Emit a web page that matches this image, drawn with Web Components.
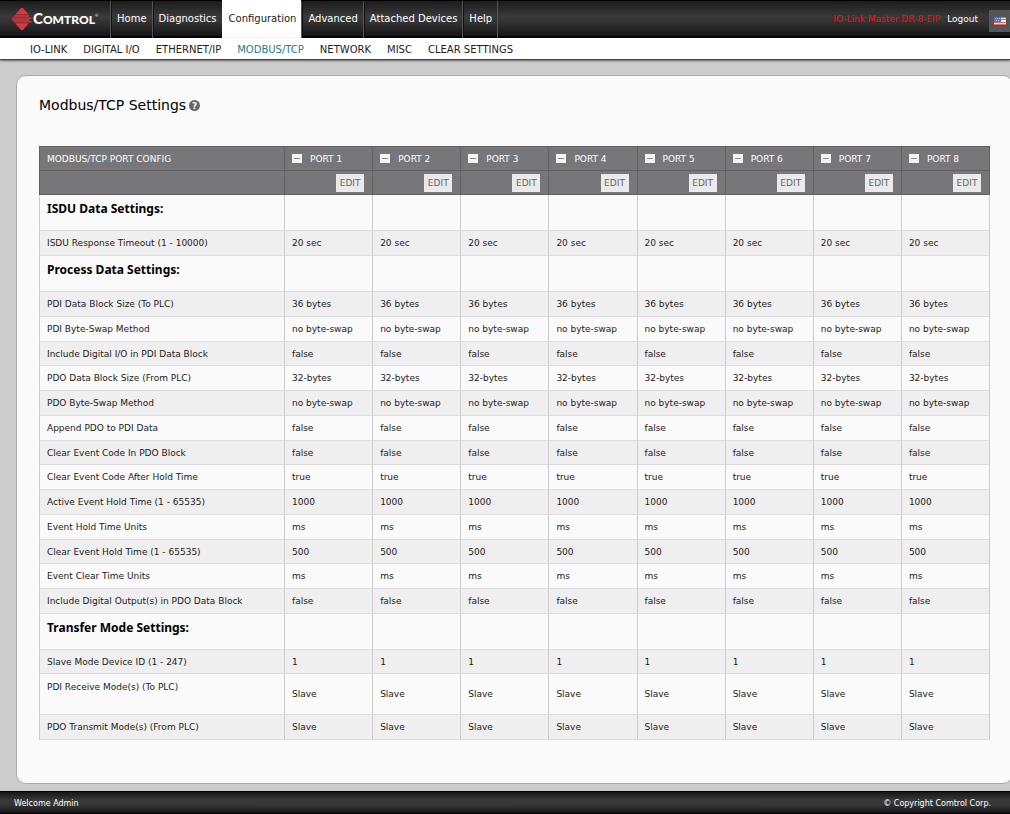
<!DOCTYPE html>
<html lang="en">
<head>
<meta charset="utf-8">
<title>Modbus/TCP Settings</title>
<style>
  html, body { margin: 0; }
  body { font-family: "DejaVu Sans", Verdana, sans-serif; font-size: 9px; color: #222; }
</style>
</head>
<body>
<config-app>
  <site-header slot="header" device="IO-Link Master DR-8-EIP"></site-header>
  <sub-nav slot="nav"></sub-nav>
  <settings-panel heading="Modbus/TCP Settings"><port-table></port-table></settings-panel>
  <site-footer slot="footer"><span>Welcome Admin</span><span slot="end">© Copyright Comtrol Corp.</span></site-footer>
</config-app>

<script>
class Base extends HTMLElement {
  connectedCallback() {
    if (this.shadowRoot) return;
    this.attachShadow({ mode: "open" }).innerHTML = this.render();
  }
}

customElements.define("config-app", class extends Base {
  render() {
    return `<style>
      :host { display: flex; flex-direction: column; min-height: 100vh; overflow: hidden; background: #ccc; }
      main { flex: 1; padding: 12px 0 7px 16px; }
    </style>
    <slot name="header"></slot><slot name="nav"></slot>
    <main><slot></slot></main>
    <slot name="footer"></slot>`;
  }
});

customElements.define("site-logo", class extends Base {
  render() {
    return `<style>
      :host { display: block; }
      a { display: flex; align-items: center; gap: 1px; color: #fff; text-decoration: none; }
      .word { font: 900 12px/16px Lato, sans-serif; }
      .word b { font-size: 15px; font-weight: 900; }
      small { font: 4px/4px Lato, sans-serif; align-self: flex-start; margin-top: 6px; margin-left: -1px; }
    </style>
    <a href="#"><svg width="21" height="22" viewBox="0 0 21 22" aria-hidden="true">
      <path fill="#e0363b" d="M10 0h2l5.5 6.6H4.500zM4 7.200h14v1.500H2.600zM2 9.400h18.500v1.300H.800zM.5 11.300h18v1.400H1.600zM2.200 13.300H20.500v1.300H3.500zM4.200 15.300h13.500l-5.700 6.700h-2z"/>
    </svg><span class="word"><b>C</b>OMTROL</span><small>®</small></a>`;
  }
});

customElements.define("site-header", class extends Base {
  render() {
    const tabs = ["Home", "Diagnostics", "Configuration", "Advanced", "Attached Devices", "Help"];
    return `<style>
      :host { display: flex; height: 38px; box-sizing: border-box; border-top: 1px solid #000; border-bottom: 2px solid #000;
        background: linear-gradient(#1c1c1c, #3a3a3a 45%, #333 60%, #151515); }
      site-logo { width: 99px; padding: 7px 0 0 11px; height: 28px; flex: none; }
      nav { display: flex; margin-bottom: -2px; }
      nav a { padding: 0 5px 0 6px; border-left: 1px solid #555; box-shadow: inset 1px 0 #111; font-size: 10px; line-height: 35px; color: #fff; text-decoration: none; white-space: nowrap; }
      nav a:last-child { border-right: 1px solid #555; }
      nav a[aria-current] { background: #fff; color: #222; margin-top: -1px; padding-top: 1px; box-shadow: none; border-color: #fff; }
      .end { display: flex; align-items: center; margin-left: auto; font-size: 9px; }
      .device { color: #f00c0c; }
      .end a { color: #fff; text-decoration: none; margin: 0 11px 0 7px; }
      button { width: 21px; height: 22px; padding: 0 0 0 5px; margin-top: 4px; border: 0; background: #555; display: flex; align-items: center; }
      button svg { flex: none; }
    </style>
    <site-logo></site-logo>
    <nav aria-label="Main">${tabs.map(t => `<a href="#"${t === "Configuration" ? ' aria-current="page"' : ""}>${t}</a>`).join("")}</nav>
    <div class="end"><span class="device">${this.getAttribute("device")}</span><a href="#">Logout</a>
      <button type="button" aria-label="Language"><svg width="12" height="8" viewBox="0 0 12 8">
        <path fill="#f3e6e6" d="M0 0h12v8H0z"/><path fill="#e06a62" d="M6 0h6v1H6zM6 2h6v1H6zM0 5h12v1H0zM0 7h12v1H0z"/><path fill="#4a74d8" d="M0 0h7v5H0z"/><path fill="#a9bff0" d="M1 1h1v1H1zM3 1h1v1H3zM5 1h1v1H5zM2 3h1v1H2zM4 3h1v1H4z"/>
      </svg></button></div>`;
  }
});

customElements.define("sub-nav", class extends Base {
  render() {
    const items = ["IO-LINK", "DIGITAL I/O", "ETHERNET/IP", "MODBUS/TCP", "NETWORK", "MISC", "CLEAR SETTINGS"];
    return `<style>
      :host { display: block; background: #fff; border-bottom: 1px solid #444; box-shadow: 0 1px 2px #666; position: relative; }
      nav { display: flex; gap: 16px; padding-left: 30px; }
      a { font-size: 10px; line-height: 19px; padding-top: 2px; color: #222; text-decoration: none; white-space: nowrap; }
      a[aria-current] { color: #1b7c99; }
    </style>
    <nav aria-label="Configuration">${items.map(t => `<a href="#"${t === "MODBUS/TCP" ? ' aria-current="page"' : ""}>${t}</a>`).join("")}</nav>
    `;
  }
});

customElements.define("settings-panel", class extends Base {
  render() {
    return `<style>
      :host { display: block; margin-top: 3px; margin-right: -3px; padding: 20px 22px 43px; background: #fafafa; border: 1px solid #aaa; border-radius: 10px; }
      header { display: flex; align-items: center; gap: 3px; margin-bottom: 32px; }
      h1 { font-size: 14px; line-height: 18px; font-weight: normal; color: #000; margin: 0; }
      button { padding: 0; border: 0; background: none; display: flex; }
      text { font: bold 9px "DejaVu Sans", sans-serif; }
    </style>
    <header><h1>${this.getAttribute("heading")}</h1>
      <button type="button" aria-label="Help"><svg width="11" height="11" viewBox="0 0 11 11"><circle cx="5.5" cy="5.5" r="5.5" fill="#666"/><text x="5.5" y="9" text-anchor="middle" fill="#fff">?</text></svg></button>
    </header><slot></slot>`;
  }
});

const ROWS = [
  ["ISDU Data Settings:"],
  ["ISDU Response Timeout (1 - 10000)", "20 sec"],
  ["Process Data Settings:"],
  ["PDI Data Block Size (To PLC)", "36 bytes"],
  ["PDI Byte-Swap Method", "no byte-swap"],
  ["Include Digital I/O in PDI Data Block", "false", "short"],
  ["PDO Data Block Size (From PLC)", "32-bytes"],
  ["PDO Byte-Swap Method", "no byte-swap"],
  ["Append PDO to PDI Data", "false"],
  ["Clear Event Code In PDO Block", "false", "short"],
  ["Clear Event Code After Hold Time", "true"],
  ["Active Event Hold Time (1 - 65535)", "1000"],
  ["Event Hold Time Units", "ms"],
  ["Clear Event Hold Time (1 - 65535)", "500", "short"],
  ["Event Clear Time Units", "ms"],
  ["Include Digital Output(s) in PDO Data Block", "false"],
  ["Transfer Mode Settings:"],
  ["Slave Mode Device ID (1 - 247)", "1", "short"],
  ["PDI Receive Mode(s) (To PLC)", "Slave", "tall"],
  ["PDO Transmit Mode(s) (From PLC)", "Slave"]
];

customElements.define("port-table", class extends Base {
  render() {
    const ports = [1, 2, 3, 4, 5, 6, 7, 8];
    return `<style>
      :host { display: block; }
      table { width: 100%; table-layout: fixed; border-collapse: separate; border-spacing: 0; }
      .name { width: 246px; }
      th, td { box-sizing: border-box; padding: 0 8px 0 7px; text-align: left; font-weight: normal; line-height: 12px; white-space: nowrap;
        border-right: 1px solid #ccc; border-bottom: 1px solid #ddd; }
      tr > :first-child { border-left: 1px solid #ccc; }
      thead th, thead td { background: #777779; color: #fff; border-color: #606062 !important; height: 24px; }
      thead tr:first-child > * { border-top: 1px solid #606062; height: 25px; }
      tbody > tr { height: 25px; }
      tbody > tr.short { height: 24px; }
      tbody > tr.section { height: 36px; }
      tbody > tr.tall { height: 41px; }
      tbody > tr:nth-child(even) { background: #efefef; }
      tbody th { vertical-align: top; padding-top: 6px; }
      tbody > tr.section th { font: bold 12px/16px "Noto Sans", sans-serif; color: #000; }
      .tall th { padding-top: 7px; }
      .port { display: flex; align-items: center; gap: 8px; }
      .toggle { width: 10px; height: 9px; padding: 0; border: 0; background: #f4f4f4; display: flex; align-items: center; justify-content: center; }
      .toggle i { width: 6px; height: 1px; background: #888; }
      .edit { display: block; margin-left: auto; width: 28px; height: 18px; padding: 0; border: 0; background: #eaeaea; color: #666; font: 9px/18px "DejaVu Sans", sans-serif; }
    </style>
    <table><colgroup><col class="name">${ports.map(() => "<col>").join("")}</colgroup>
    <thead><tr><th scope="col">MODBUS/TCP PORT CONFIG</th>${ports.map(p => `<th scope="col"><div class="port"><button type="button" class="toggle" aria-label="Collapse port ${p}"><i></i></button><span>PORT ${p}</span></div></th>`).join("")}</tr>
    <tr><td></td>${ports.map(p => `<td><button type="button" class="edit">EDIT</button></td>`).join("")}</tr></thead>
    <tbody>${ROWS.map(([n, v, c]) => `<tr class="${v ? c || "" : "section"}"><th scope="row">${n}</th>${ports.map(() => `<td>${v || ""}</td>`).join("")}</tr>`).join("")}</tbody></table>`;
  }
});

customElements.define("site-footer", class extends Base {
  render() {
    return `<style>
      :host { display: flex; justify-content: space-between; padding: 2px 19px 0 14px; color: #fff; font-size: 8px; line-height: 19px;
        border-top: 1px solid #000; border-bottom: 1px solid #000; background: linear-gradient(#161616, #393939 40%, #333 65%, #151515); }
    </style><slot></slot><slot name="end"></slot>`;
  }
});
</script>
</body>
</html>
